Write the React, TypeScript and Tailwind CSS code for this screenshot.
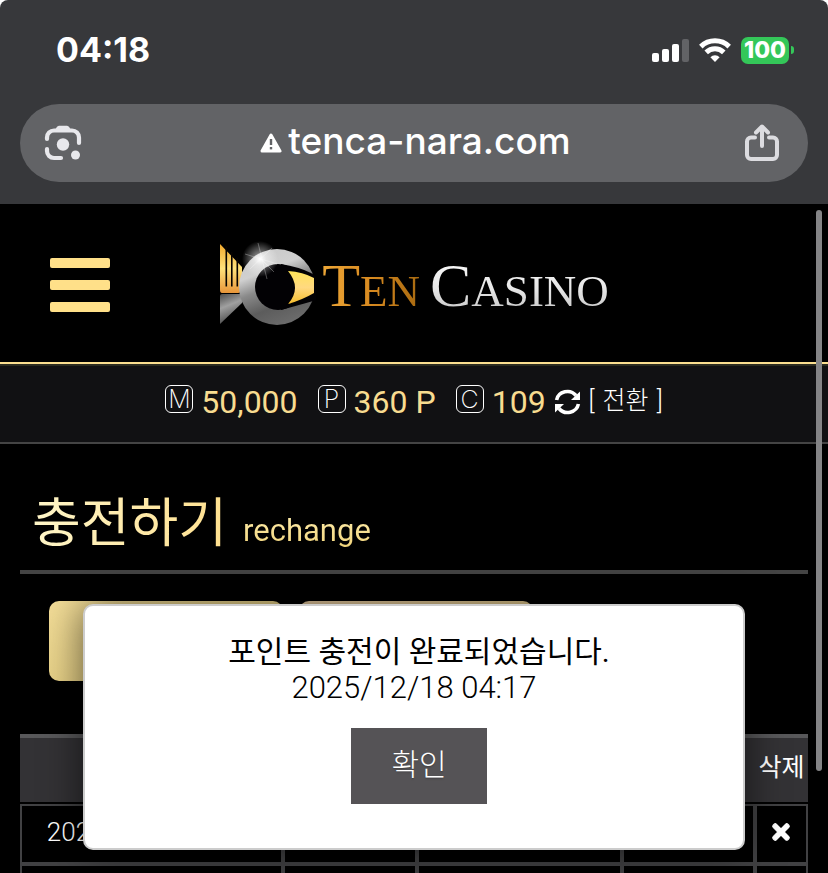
import { FaTimes } from "react-icons/fa";

interface Balance {
  mark: string;
  label: string;
  value: string;
}

const balances: Balance[] = [
  { mark: "M", label: "보유머니", value: "50,000" },
  { mark: "P", label: "포인트", value: "360 P" },
  { mark: "C", label: "콤프", value: "109" },
];

export default function App() {
  return (
    <div className="relative h-screen overflow-hidden bg-white font-['Roboto','Noto_Sans_CJK_KR',sans-serif]">
      <BrowserBar />
      <div className="min-h-screen bg-black">
        <SiteHeader />
        <BalanceBar />
        <main className="px-5">
          <h1 className="flex h-[130px] items-end border-b-4 border-[#444] pb-4 pl-3">
            <span className="bg-linear-to-r from-[#fff6c8] to-[#ffe08e] bg-clip-text text-[53px] leading-[60px] text-transparent">
              충전하기
            </span>
            <span className="ml-4 bg-linear-to-b from-[#fff0b4] to-[#f0d070] bg-clip-text text-[31px] leading-[46px] text-transparent">
              rechange
            </span>
          </h1>
          <div className="mt-[27px] flex gap-4 px-[29px]">
            <button
              type="button"
              aria-label="충전신청"
              className="h-20 w-[234px] rounded-[10px] bg-linear-to-br from-[#f3dd98] to-[#dcc678]"
            />
            <button
              type="button"
              aria-label="충전내역"
              className="h-20 w-[234px] rounded-[10px] bg-linear-to-br from-[#e6caa0] to-[#dcc678]"
            />
          </div>
          <HistoryTable />
        </main>
      </div>
      <ChargeDialog />
      {/* scroll thumb */}
      <div className="absolute top-[210px] right-1.5 h-[561px] w-1.5 rounded-full bg-[#848486]" />
    </div>
  );
}

function BrowserBar() {
  return (
    <header className="h-[204px] rounded-t-lg bg-[#37383b] px-5 font-['Inter',sans-serif] text-white">
      <div className="flex h-[104px] items-center justify-between pr-[14px] pb-1 pl-9">
        <time className="text-[34px] leading-10 font-bold">04:18</time>
        <div className="flex items-center gap-[10px]">
          <svg width="37" height="23" viewBox="0 0 37 23" fill="#fff" aria-hidden="true">
            <rect x="0" y="14" width="7" height="9" rx="2" />
            <rect x="10" y="10" width="7" height="13" rx="2" />
            <rect x="20" y="5" width="7" height="18" rx="2" />
            <rect x="30" y="0" width="7" height="23" rx="2" fill="#626366" />
          </svg>
          <svg width="32" height="24" viewBox="0 0 32 24" fill="none" stroke="#fff" strokeWidth="5" aria-hidden="true">
            <path d="M1.8 8.6a20.4 20.4 0 0 1 28.4 0" />
            <path d="M7.2 14.4a12.6 12.6 0 0 1 17.6 0" />
            <path d="M16 24l-4.6-4.7a6.4 6.4 0 0 1 9.2 0z" fill="#fff" stroke="none" />
          </svg>
          <div className="flex items-center gap-0.5">
            <span className="flex h-[27px] w-12 items-center justify-center rounded-[7px] bg-[#34c759] text-[23px] leading-none font-extrabold">
              100
            </span>
            <span className="h-2 w-[3px] rounded-r-full bg-[#34c759]" />
          </div>
        </div>
      </div>
      <div className="flex h-[78px] items-center justify-between rounded-full bg-[#626366] pr-[27px] pl-6">
        <button type="button" aria-label="카메라로 검색">
          <svg width="38" height="38" viewBox="0 0 38 38" fill="none" stroke="#e8e8ec" strokeWidth="4.200" strokeLinecap="round" aria-hidden="true">
            <path d="M3 15v-1.500a7 7 0 0 1 7-7h18a7 7 0 0 1 7 7V19" />
            <path d="M3 25v2a7 7 0 0 0 7 7h7" />
            <path d="M10.500 7l2.300-4a3 3 0 0 1 2.200-1.300h8A3 3 0 0 1 25.200 3l2.300 4z" fill="#e8e8ec" stroke="none" />
            <circle cx="19" cy="20.500" r="6.200" fill="#e8e8ec" stroke="none" />
            <circle cx="31.500" cy="31" r="4.500" fill="#e8e8ec" stroke="none" />
          </svg>
        </button>
        <button type="button" className="flex items-center gap-1.5 pl-1.5">
          <svg width="22" height="20" viewBox="0 0 22 20" aria-hidden="true">
            <path d="M11 2L20 18H2z" fill="#fff" stroke="#fff" strokeWidth="3" strokeLinejoin="round" />
            <path d="M11 6v6" stroke="#626366" strokeWidth="2.400" />
            <path d="M11 14v2.400" stroke="#626366" strokeWidth="2.400" />
          </svg>
          <span className="pb-1 text-[37px] leading-[46px] font-medium">tenca-nara.com</span>
        </button>
        <button type="button" aria-label="공유">
          <svg width="38" height="38" viewBox="0 0 38 38" fill="none" stroke="#dcdce0" strokeWidth="4" strokeLinecap="round" aria-hidden="true">
            <path d="M12 13.500H8a4 4 0 0 0-4 4V31a4 4 0 0 0 4 4h22a4 4 0 0 0 4-4V17.500a4 4 0 0 0-4-4h-4" />
            <path d="M19 22V4M13 8.500l6-6 6 6" strokeLinejoin="round" />
          </svg>
        </button>
      </div>
    </header>
  );
}

function SiteHeader() {
  return (
    <div className="flex h-40 items-center justify-between border-b-2 border-[#fbdf90] px-[50px]">
      <button type="button" aria-label="메뉴" className="flex w-[60px] flex-col gap-3 pt-1">
        <span className="h-[10px] rounded-xs bg-[#ffe089]" />
        <span className="h-[10px] rounded-xs bg-[#ffe089]" />
        <span className="h-[10px] rounded-xs bg-[#ffe089]" />
      </button>
      <a href="#" className="flex items-center gap-1.5 pt-0.5">
        <LogoMark />
        <span className="flex items-baseline gap-2.5 pt-2 font-['Liberation_Serif',serif] text-[45px] leading-[70px]">
          <span className="bg-linear-to-r from-[#eda737] via-[#d88a20] to-[#a86a10] bg-clip-text text-transparent">
            <span className="text-[62px]">T</span>EN
          </span>
          <span className="bg-linear-to-b from-white via-[#e8e8e8] to-[#b4b4b4] bg-clip-text text-transparent">
            <span className="text-[62px]">C</span>ASINO
          </span>
        </span>
      </a>
      <span className="w-[60px]" />
    </div>
  );
}

function LogoMark() {
  return (
    <svg width="97" height="86" viewBox="220 241 97 86" aria-hidden="true">
      <defs>
        <linearGradient id="fin" x1="0" y1="0" x2="0" y2="1">
          <stop offset="0" stopColor="#f2a92c" />
          <stop offset="0.500" stopColor="#ffe27a" />
          <stop offset="1" stopColor="#e8963a" />
        </linearGradient>
        <linearGradient id="ring" x1="0.200" y1="0" x2="0.600" y2="1">
          <stop offset="0" stopColor="#c8c8c8" />
          <stop offset="0.300" stopColor="#d0d0d0" />
          <stop offset="0.500" stopColor="#8a8a8a" />
          <stop offset="0.750" stopColor="#5c5c5c" />
          <stop offset="1" stopColor="#6c6c6c" />
        </linearGradient>
        <linearGradient id="tail" x1="0" y1="0" x2="0.300" y2="1">
          <stop offset="0" stopColor="#4c4c4c" />
          <stop offset="0.450" stopColor="#a0a0a0" />
          <stop offset="1" stopColor="#4a4a4a" />
        </linearGradient>
        <linearGradient id="eye" x1="0" y1="0" x2="0" y2="1">
          <stop offset="0" stopColor="#ffe458" />
          <stop offset="0.500" stopColor="#ffd980" />
          <stop offset="1" stopColor="#f6bd2c" />
        </linearGradient>
        <radialGradient id="flare">
          <stop offset="0" stopColor="#fff" />
          <stop offset="0.350" stopColor="#fff" stopOpacity="0.450" />
          <stop offset="1" stopColor="#fff" stopOpacity="0" />
        </radialGradient>
      </defs>
      <path d="M221 244L243 267V290Q242 293 239 293H223Q221 293 221 290z" fill="url(#fin)" />
      <path d="M227.300 246v40.500M232.800 252v34.500M238.300 258v28.500" stroke="#080400" strokeWidth="1.600" />
      <path d="M221 296Q221 294 223 294H243V303L221 324z" fill="url(#tail)" />
      <circle cx="278" cy="287" r="38" fill="url(#ring)" />
      <circle cx="279" cy="287" r="23" fill="#020104" />
      <path d="M282 264Q300 267 312 273L318 277V300L282 310z" fill="#020104" />
      <path d="M289 271Q304 272 315 278V293Q303 300 289 304Q303 288 289 271z" fill="url(#eye)" />
      <circle cx="261" cy="259" r="18" fill="url(#flare)" />
      <path d="M246 254l32 10M259 243l9 36M251 269l22-21M262 259l13 13" stroke="#fff" strokeWidth="0.600" opacity="0.500" />
    </svg>
  );
}

function BalanceBar() {
  return (
    <div className="flex h-20 items-center justify-center border-t-2 border-b-2 border-t-[#2b2b20] border-b-[#444] bg-[#111113] pb-1">
      <dl className="flex gap-5">
        {balances.map((b) => (
          <div key={b.mark} className="flex items-center gap-2">
            <dt
              title={b.label}
              className="mb-1.5 flex size-7 items-center justify-center rounded-md border border-white font-['Inter',sans-serif] text-[25px] leading-none font-extralight text-white"
            >
              {b.mark}
            </dt>
            <dd className="text-[32px] leading-10 text-[#f8dc90]">{b.value}</dd>
          </div>
        ))}
      </dl>
      <button type="button" className="ml-2 flex items-center gap-2 text-white">
        <svg width="27" height="26" viewBox="0 0 27 26" fill="none" stroke="#fff" strokeWidth="3.600" aria-hidden="true">
          <path d="M2.600 11A11 10.500 0 0 1 22 6.500" />
          <path d="M26 2.500v8.500h-9z" fill="#fff" stroke="none" />
          <path d="M24.400 15A11 10.500 0 0 1 5 19.500" />
          <path d="M1 23.500v-8.500h9z" fill="#fff" stroke="none" />
        </svg>
        <span className="flex gap-2 pb-0.5 text-[25px] leading-10 font-light">
          <span>[</span>
          <span>전환</span>
          <span>]</span>
        </span>
      </button>
    </div>
  );
}

function HistoryTable() {
  return (
    <table className="mt-[53px] w-full table-fixed border-separate border-spacing-0 text-[26px] text-white">
      <colgroup>
        <col className="w-[33.4%]" />
        <col className="w-[17%]" />
        <col className="w-[26%]" />
        <col />
        <col className="w-[53px]" />
      </colgroup>
      <thead>
        <tr className="h-[70px] bg-[#333235]">
          {["", "", "", "", "삭제"].map((name, i) => (
            <th
              key={i}
              className="border-t-4 border-b-2 border-t-[#58585a] border-b-black p-0 pb-1 text-[25px] font-normal whitespace-nowrap"
            >
              {name}
            </th>
          ))}
        </tr>
      </thead>
      <tbody className="[&_td]:border-2 [&_td]:border-[#414143] [&_td]:p-0">
        <tr className="h-[60px] text-center">
          <td className="font-light">
            <div className="pr-1 pb-1">2025/12/18 04:17</div>
          </td>
          <td />
          <td />
          <td />
          <td>
            <button type="button" aria-label="삭제" className="flex w-full justify-center pr-0.5 pb-1">
              <FaTimes size={24} stroke="currentColor" strokeWidth={24} />
            </button>
          </td>
        </tr>
        <tr className="h-[60px]">
          <td />
          <td />
          <td />
          <td />
          <td />
        </tr>
      </tbody>
    </table>
  );
}

function ChargeDialog() {
  return (
    <div className="absolute inset-x-0 top-[604px] flex justify-center">
      <div
        role="alertdialog"
        aria-labelledby="charge-title"
        aria-describedby="charge-date"
        className="flex w-4/5 flex-col items-center rounded-[10px] border-2 border-[#ccc] bg-white pt-7 pb-11 text-black shadow-[0_0_40px_rgba(0,0,0,0.6)]"
      >
        <p id="charge-title" className="pl-2.5 text-[30px] leading-9">
          포인트 충전이 완료되었습니다.
        </p>
        <p id="charge-date" className="text-[31px] leading-9 font-light">
          2025/12/18 04:17
        </p>
        <button
          type="button"
          className="mt-[22px] ml-2.5 h-[76px] w-[136px] bg-[#555356] pb-1 text-[30px] font-light text-white text-shadow-sm"
        >
          확인
        </button>
      </div>
    </div>
  );
}
